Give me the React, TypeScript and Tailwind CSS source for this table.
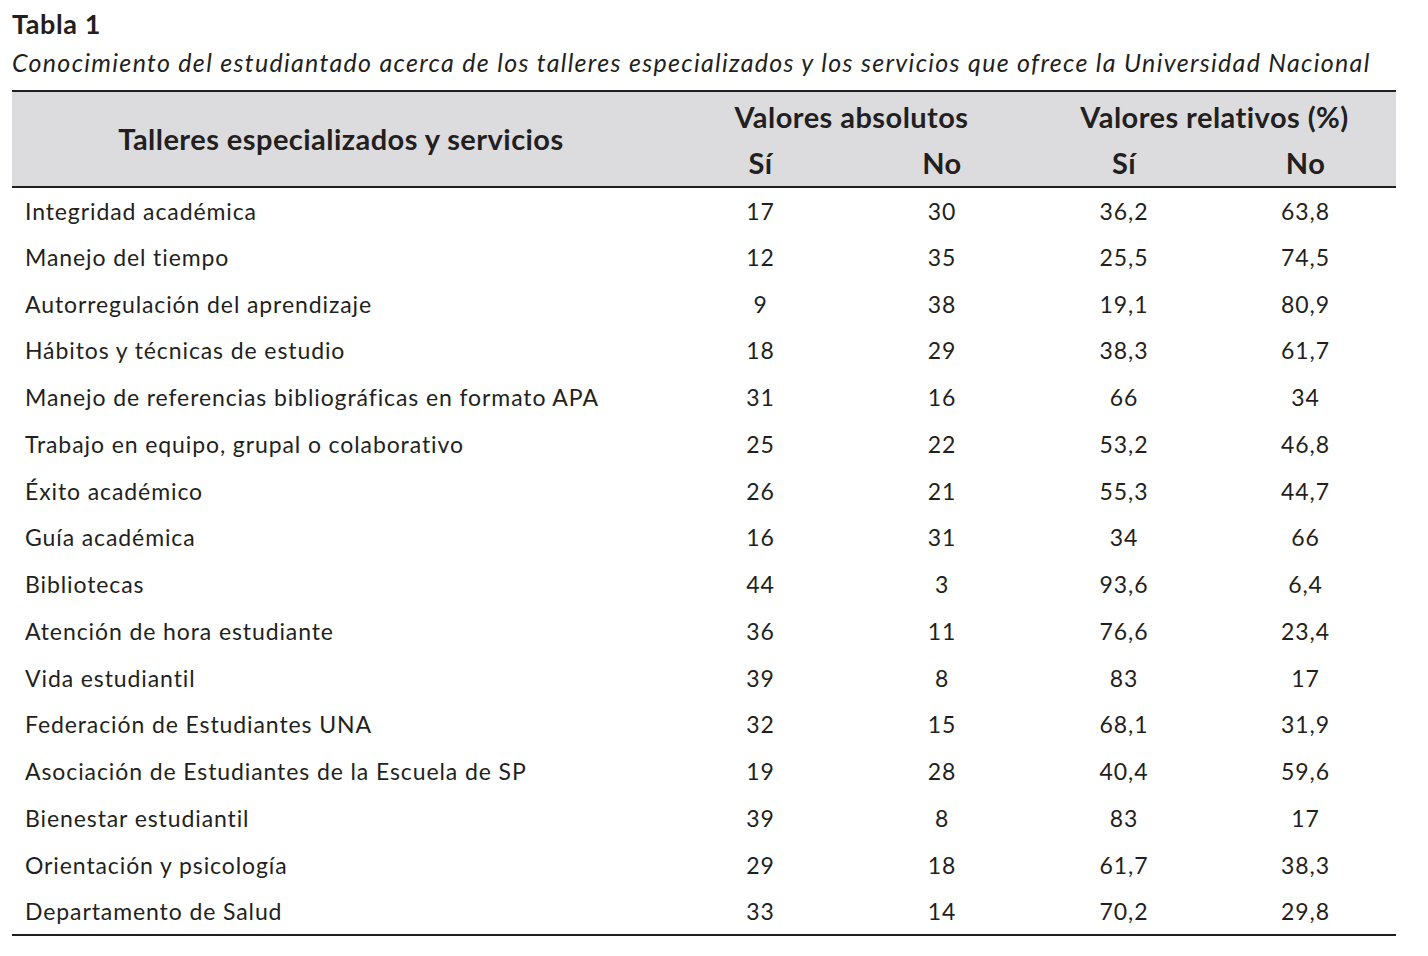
const rows: [string, string, string, string, string][] = [
  ["Integridad académica", "17", "30", "36,2", "63,8"],
  ["Manejo del tiempo", "12", "35", "25,5", "74,5"],
  ["Autorregulación del aprendizaje", "9", "38", "19,1", "80,9"],
  ["Hábitos y técnicas de estudio", "18", "29", "38,3", "61,7"],
  ["Manejo de referencias bibliográficas en formato APA", "31", "16", "66", "34"],
  ["Trabajo en equipo, grupal o colaborativo", "25", "22", "53,2", "46,8"],
  ["Éxito académico", "26", "21", "55,3", "44,7"],
  ["Guía académica", "16", "31", "34", "66"],
  ["Bibliotecas", "44", "3", "93,6", "6,4"],
  ["Atención de hora estudiante", "36", "11", "76,6", "23,4"],
  ["Vida estudiantil", "39", "8", "83", "17"],
  ["Federación de Estudiantes UNA", "32", "15", "68,1", "31,9"],
  ["Asociación de Estudiantes de la Escuela de SP", "19", "28", "40,4", "59,6"],
  ["Bienestar estudiantil", "39", "8", "83", "17"],
  ["Orientación y psicología", "29", "18", "61,7", "38,3"],
  ["Departamento de Salud", "33", "14", "70,2", "29,8"],
];

const App = () => {
  return (
    <main className="w-[1428px] h-[956px] bg-white text-[#231f20] font-['Lato','Noto_Sans',sans-serif] pl-3 pt-[8px]">
      <h1 className="text-[27px] font-bold leading-[32px] tracking-[0.6px]">Tabla 1</h1>
      <p className="text-[25px] italic leading-[32px] mt-[6px] tracking-[1.3px] whitespace-nowrap">
        Conocimiento del estudiantado acerca de los talleres especializados y los servicios que ofrece la Universidad Nacional
      </p>
      <table className="w-[1384px] mt-[12px] border-collapse table-fixed text-[23px] tracking-[0.9px]">
        <colgroup>
          <col className="w-[658px]" />
          <col className="w-[181px]" />
          <col className="w-[182px]" />
          <col className="w-[182px]" />
          <col className="w-[181px]" />
        </colgroup>
        <thead className="bg-[#dcdcde] font-bold text-[29px] tracking-[0.45px]">
          <tr className="border-t-2 border-[#231f20] h-[49px]">
            <th rowSpan={2} className="text-center align-middle">
              Talleres especializados y servicios
            </th>
            <th colSpan={2} className="text-center pt-[2px]">Valores absolutos</th>
            <th colSpan={2} className="text-center pt-[2px]">Valores relativos (%)</th>
          </tr>
          <tr className="border-b-2 border-[#231f20] h-[47px]">
            <th className="text-center">Sí</th>
            <th className="text-center">No</th>
            <th className="text-center">Sí</th>
            <th className="text-center">No</th>
          </tr>
        </thead>
        <tbody className="border-b-2 border-[#231f20]">
          {rows.map((r) => (
            <tr key={r[0]} className="h-[46.75px]">
              <td className="pl-[13px] text-left">{r[0]}</td>
              <td className="text-center">{r[1]}</td>
              <td className="text-center">{r[2]}</td>
              <td className="text-center">{r[3]}</td>
              <td className="text-center">{r[4]}</td>
            </tr>
          ))}
        </tbody>
      </table>
    </main>
  );
};

export default App;
